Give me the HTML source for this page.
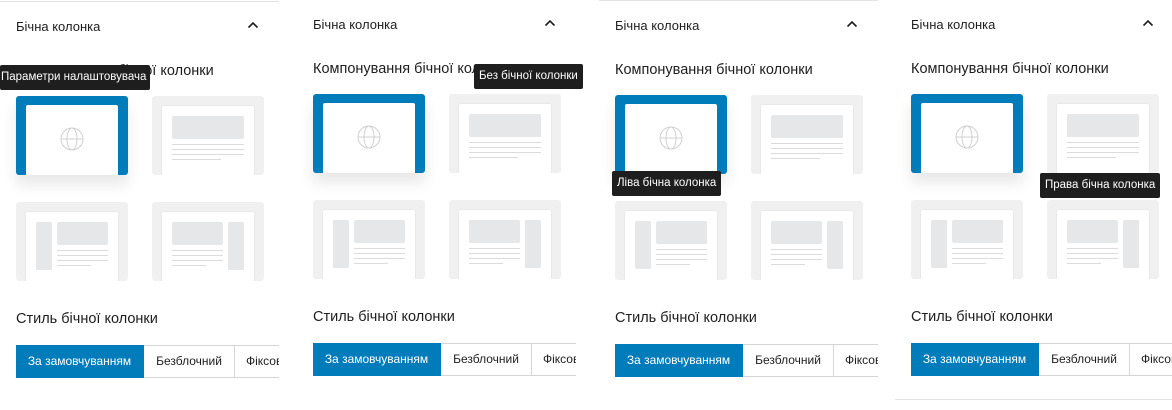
<!DOCTYPE html>
<html><head><meta charset="utf-8">
<style>
*{box-sizing:border-box;margin:0;padding:0}
body{width:1172px;height:403px;background:#fff;position:relative;overflow:hidden;font-family:"Liberation Sans","Noto Sans CJK SC",sans-serif;color:#1e1e1e}
.p{position:absolute;top:0;width:279px;height:410px;overflow:hidden}
.p .top{position:absolute;left:0;right:0;top:1px;height:1px;background:#e4e4e4}
.p .bot{position:absolute;left:0;right:0;top:401px;height:1px;background:#e4e4e4}
.h{position:absolute;left:16px;top:19px;font-size:13px}
.chev{position:absolute;left:246px;top:18px}
.lab{position:absolute;left:16px;top:63px;font-size:14.5px;white-space:nowrap}
.lab2{position:absolute;left:16px;top:311px;font-size:14.5px;white-space:nowrap}
.c{position:absolute;width:112px;height:79px;border-radius:3px;background:#f0f0f1;overflow:hidden}
.c .in{position:absolute;left:10px;right:10px;top:10px;bottom:0;background:#fff;border-radius:2px 2px 0 0;box-shadow:0 0 0 1px #e9e9ea}
.c.sel{background:#007cba;box-shadow:0 10px 14px rgba(0,0,0,.09)}
.c.sel .in{top:9px;box-shadow:none}
.blk{position:absolute;background:#e6e7e9;border-radius:2px}
.ln{position:absolute;height:1px;background:#dcdcde}
.btns{position:absolute;left:16px;top:345px;height:33px;display:flex;font-size:12px;white-space:nowrap}
.btns div{height:33px;line-height:31px;border:1px solid #d5d5d5;border-left:none;padding:0 11px}
.btns .a{background:#007cba;color:#fff;border-color:#007cba;width:128px;padding:0;text-align:center}
.btns .b{width:91px;padding:0;text-align:center}
.tip{position:absolute;background:#1e1e1e;color:#fff;font-size:11.5px;height:25px;line-height:25px;padding:0 5px;border-radius:2px;white-space:nowrap;z-index:5}
</style></head><body>

<div class="p" style="left:0;top:0">
<div class="top"></div>
<div class="h">Бічна колонка</div>
<svg class="chev" width="14" height="14" viewBox="0 0 14 14"><path d="M2.5 9.5 L7 5 L11.5 9.5" fill="none" stroke="#1e1e1e" stroke-width="1.6"/></svg>
<div class="lab">Компонування бічної колонки</div>
<div class="c sel" style="left:16px;top:96px"><div class="in"><svg style="position:absolute;left:33px;top:21px" width="26" height="26" viewBox="0 0 26 26"><g fill="none" stroke="#d0d0d3" stroke-width="1"><circle cx="13" cy="13" r="11"/><ellipse cx="13" cy="13" rx="5" ry="11"/><line x1="2" y1="13" x2="24" y2="13"/></g></svg></div></div>
<div class="c" style="left:152px;top:96px"><div class="in"><div class="blk" style="left:10px;top:10px;width:72px;height:23px"></div><div class="ln" style="left:10px;top:38px;width:72px"></div><div class="ln" style="left:10px;top:43px;width:72px"></div><div class="ln" style="left:10px;top:48px;width:72px"></div><div class="ln" style="left:10px;top:53px;width:49px"></div></div></div>
<div class="c" style="left:16px;top:202px"><div class="in"><div class="blk" style="left:10px;top:10px;width:16px;height:48px"></div><div class="blk" style="left:31px;top:10px;width:51px;height:23px"></div><div class="ln" style="left:31px;top:38px;width:51px"></div><div class="ln" style="left:31px;top:43px;width:51px"></div><div class="ln" style="left:31px;top:48px;width:51px"></div><div class="ln" style="left:31px;top:53px;width:34px"></div></div></div>
<div class="c" style="left:152px;top:202px"><div class="in"><div class="blk" style="left:66px;top:10px;width:16px;height:48px"></div><div class="blk" style="left:10px;top:10px;width:51px;height:23px"></div><div class="ln" style="left:10px;top:38px;width:51px"></div><div class="ln" style="left:10px;top:43px;width:51px"></div><div class="ln" style="left:10px;top:48px;width:51px"></div><div class="ln" style="left:10px;top:53px;width:34px"></div></div></div>
<div class="lab2">Стиль бічної колонки</div>
<div class="btns"><div class="a">За замовчуванням</div><div class="b">Безблочний</div><div>Фіксований</div></div>
</div>

<div class="p" style="left:297px;top:-2px">
<div class="top"></div>
<div class="h">Бічна колонка</div>
<svg class="chev" width="14" height="14" viewBox="0 0 14 14"><path d="M2.5 9.5 L7 5 L11.5 9.5" fill="none" stroke="#1e1e1e" stroke-width="1.6"/></svg>
<div class="lab">Компонування бічної колонки</div>
<div class="c sel" style="left:16px;top:96px"><div class="in"><svg style="position:absolute;left:33px;top:21px" width="26" height="26" viewBox="0 0 26 26"><g fill="none" stroke="#d0d0d3" stroke-width="1"><circle cx="13" cy="13" r="11"/><ellipse cx="13" cy="13" rx="5" ry="11"/><line x1="2" y1="13" x2="24" y2="13"/></g></svg></div></div>
<div class="c" style="left:152px;top:96px"><div class="in"><div class="blk" style="left:10px;top:10px;width:72px;height:23px"></div><div class="ln" style="left:10px;top:38px;width:72px"></div><div class="ln" style="left:10px;top:43px;width:72px"></div><div class="ln" style="left:10px;top:48px;width:72px"></div><div class="ln" style="left:10px;top:53px;width:49px"></div></div></div>
<div class="c" style="left:16px;top:202px"><div class="in"><div class="blk" style="left:10px;top:10px;width:16px;height:48px"></div><div class="blk" style="left:31px;top:10px;width:51px;height:23px"></div><div class="ln" style="left:31px;top:38px;width:51px"></div><div class="ln" style="left:31px;top:43px;width:51px"></div><div class="ln" style="left:31px;top:48px;width:51px"></div><div class="ln" style="left:31px;top:53px;width:34px"></div></div></div>
<div class="c" style="left:152px;top:202px"><div class="in"><div class="blk" style="left:66px;top:10px;width:16px;height:48px"></div><div class="blk" style="left:10px;top:10px;width:51px;height:23px"></div><div class="ln" style="left:10px;top:38px;width:51px"></div><div class="ln" style="left:10px;top:43px;width:51px"></div><div class="ln" style="left:10px;top:48px;width:51px"></div><div class="ln" style="left:10px;top:53px;width:34px"></div></div></div>
<div class="lab2">Стиль бічної колонки</div>
<div class="btns"><div class="a">За замовчуванням</div><div class="b">Безблочний</div><div>Фіксований</div></div>
</div>

<div class="p" style="left:599px;top:-1px">
<div class="top"></div>
<div class="h">Бічна колонка</div>
<svg class="chev" width="14" height="14" viewBox="0 0 14 14"><path d="M2.5 9.5 L7 5 L11.5 9.5" fill="none" stroke="#1e1e1e" stroke-width="1.6"/></svg>
<div class="lab">Компонування бічної колонки</div>
<div class="c sel" style="left:16px;top:96px"><div class="in"><svg style="position:absolute;left:33px;top:21px" width="26" height="26" viewBox="0 0 26 26"><g fill="none" stroke="#d0d0d3" stroke-width="1"><circle cx="13" cy="13" r="11"/><ellipse cx="13" cy="13" rx="5" ry="11"/><line x1="2" y1="13" x2="24" y2="13"/></g></svg></div></div>
<div class="c" style="left:152px;top:96px"><div class="in"><div class="blk" style="left:10px;top:10px;width:72px;height:23px"></div><div class="ln" style="left:10px;top:38px;width:72px"></div><div class="ln" style="left:10px;top:43px;width:72px"></div><div class="ln" style="left:10px;top:48px;width:72px"></div><div class="ln" style="left:10px;top:53px;width:49px"></div></div></div>
<div class="c" style="left:16px;top:202px"><div class="in"><div class="blk" style="left:10px;top:10px;width:16px;height:48px"></div><div class="blk" style="left:31px;top:10px;width:51px;height:23px"></div><div class="ln" style="left:31px;top:38px;width:51px"></div><div class="ln" style="left:31px;top:43px;width:51px"></div><div class="ln" style="left:31px;top:48px;width:51px"></div><div class="ln" style="left:31px;top:53px;width:34px"></div></div></div>
<div class="c" style="left:152px;top:202px"><div class="in"><div class="blk" style="left:66px;top:10px;width:16px;height:48px"></div><div class="blk" style="left:10px;top:10px;width:51px;height:23px"></div><div class="ln" style="left:10px;top:38px;width:51px"></div><div class="ln" style="left:10px;top:43px;width:51px"></div><div class="ln" style="left:10px;top:48px;width:51px"></div><div class="ln" style="left:10px;top:53px;width:34px"></div></div></div>
<div class="lab2">Стиль бічної колонки</div>
<div class="btns"><div class="a">За замовчуванням</div><div class="b">Безблочний</div><div>Фіксований</div></div>
</div>

<div class="p" style="left:895px;top:-2px;width:277px">
<div class="top"></div>
<div class="h">Бічна колонка</div>
<svg class="chev" width="14" height="14" viewBox="0 0 14 14"><path d="M2.5 9.5 L7 5 L11.5 9.5" fill="none" stroke="#1e1e1e" stroke-width="1.6"/></svg>
<div class="lab">Компонування бічної колонки</div>
<div class="c sel" style="left:16px;top:96px"><div class="in"><svg style="position:absolute;left:33px;top:21px" width="26" height="26" viewBox="0 0 26 26"><g fill="none" stroke="#d0d0d3" stroke-width="1"><circle cx="13" cy="13" r="11"/><ellipse cx="13" cy="13" rx="5" ry="11"/><line x1="2" y1="13" x2="24" y2="13"/></g></svg></div></div>
<div class="c" style="left:152px;top:96px"><div class="in"><div class="blk" style="left:10px;top:10px;width:72px;height:23px"></div><div class="ln" style="left:10px;top:38px;width:72px"></div><div class="ln" style="left:10px;top:43px;width:72px"></div><div class="ln" style="left:10px;top:48px;width:72px"></div><div class="ln" style="left:10px;top:53px;width:49px"></div></div></div>
<div class="c" style="left:16px;top:202px"><div class="in"><div class="blk" style="left:10px;top:10px;width:16px;height:48px"></div><div class="blk" style="left:31px;top:10px;width:51px;height:23px"></div><div class="ln" style="left:31px;top:38px;width:51px"></div><div class="ln" style="left:31px;top:43px;width:51px"></div><div class="ln" style="left:31px;top:48px;width:51px"></div><div class="ln" style="left:31px;top:53px;width:34px"></div></div></div>
<div class="c" style="left:152px;top:202px"><div class="in"><div class="blk" style="left:66px;top:10px;width:16px;height:48px"></div><div class="blk" style="left:10px;top:10px;width:51px;height:23px"></div><div class="ln" style="left:10px;top:38px;width:51px"></div><div class="ln" style="left:10px;top:43px;width:51px"></div><div class="ln" style="left:10px;top:48px;width:51px"></div><div class="ln" style="left:10px;top:53px;width:34px"></div></div></div>
<div class="lab2">Стиль бічної колонки</div>
<div class="btns"><div class="a">За замовчуванням</div><div class="b">Безблочний</div><div>Фіксований</div></div>
<div class="bot"></div>
</div>

<div class="tip" style="left:0;top:65px;padding:0 4px 0 1px">Параметри налаштовувача</div>
<div class="tip" style="left:474px;top:64px">Без бічної колонки</div>
<div class="tip" style="left:612px;top:171px">Ліва бічна колонка</div>
<div class="tip" style="left:1040px;top:173px">Права бічна колонка</div>
</body></html>
